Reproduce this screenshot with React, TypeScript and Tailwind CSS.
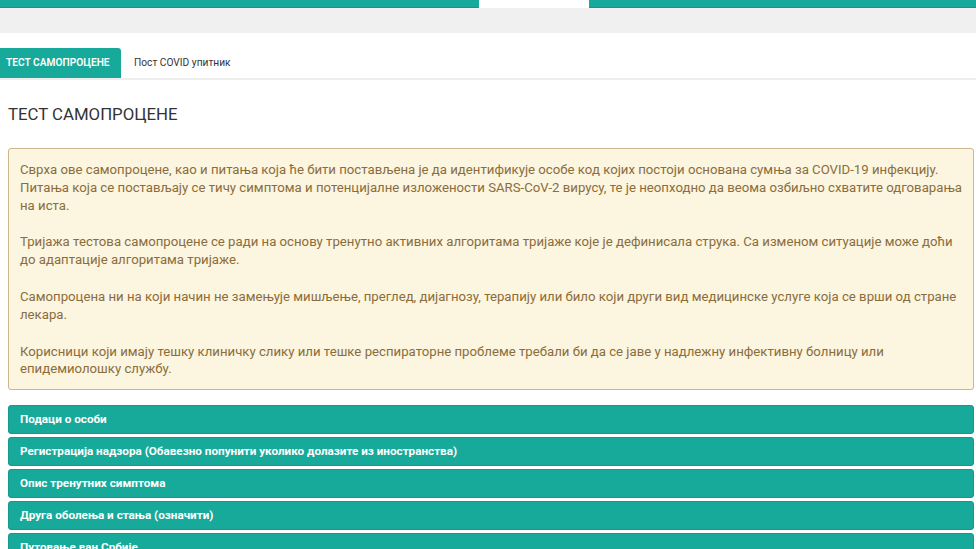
import React from 'react';

const sections = [
  'Подаци о особи',
  'Регистрација надзора (Обавезно попунити уколико долазите из иностранства)',
  'Опис тренутних симптома',
  'Друга оболења и стања (означити)',
  'Путовање ван Србије',
];

const App: React.FC = () => {
  return (
    <div className="bg-white font-['Roboto',sans-serif] text-[#333] overflow-hidden h-[549px]">
      {/* Top bar */}
      <div className="flex h-[8px]">
        <div className="w-[479px] bg-[#17a999] border-b border-[#12978a]" />
        <div className="w-[110px] bg-white" />
        <div className="flex-1 bg-[#17a999] border-b border-[#12978a]" />
      </div>
      <div className="h-[25px] bg-[#f0f0f0]" />

      {/* Tabs */}
      <div className="mt-[15px] flex border-b-2 border-[#eeeeee] h-[32px]">
        <div className="w-[121px] bg-[#17a999] rounded-tr-[3px] text-white text-[10.2px] font-semibold flex items-center pl-[6px]">
          ТЕСТ САМОПРОЦЕНЕ
        </div>
        <div className="px-[13px] text-[10.2px] text-[#333] flex items-center">Пост COVID упитник</div>
      </div>

      <div className="pl-[8px] pr-[2px]">
        <h2 className="mt-[22px] text-[16.8px] leading-[24px] text-[#333]">ТЕСТ САМОПРОЦЕНЕ</h2>

        {/* Info box */}
        <div className="mt-[22px] bg-[#fcf5e0] border border-[#cdb68c] rounded-[3px] pl-[11px] pr-[8px] pt-[12px] pb-[11px] text-[13.2px] leading-[17.8px] text-[#8a6d3b]">
          <p>
            Сврха ове самопроцене, као и питања која ће бити постављена је да идентификује особе код којих постоји основана сумња за COVID-19 инфекцију. Питања која се постављају се тичу симптома и потенцијалне изложености SARS-CoV-2 вирусу, те је неопходно да веома озбиљно схватите одговарања на иста.
          </p>
          <p className="mt-[19px]">
            Тријажа тестова самопроцене се ради на основу тренутно активних алгоритама тријаже које је дефинисала струка. Са изменом ситуације може доћи до адаптације алгоритама тријаже.
          </p>
          <p className="mt-[19px]">
            Самопроцена ни на који начин не замењује мишљење, преглед, дијагнозу, терапију или било који други вид медицинске услуге која се врши од стране лекара.
          </p>
          <p className="mt-[19px]">
            Корисници који имају тешку клиничку слику или тешке респираторне проблеме требали би да се јаве у надлежну инфективну болницу или епидемиолошку службу.
          </p>
        </div>

        {/* Accordion */}
        <div className="mt-[15px] flex flex-col gap-[3px]">
          {sections.map((s) => (
            <div
              key={s}
              className="h-[29px] shrink-0 bg-[#17a999] border border-[#14998b] rounded-[3px] px-[11px] flex items-center text-white text-[11.7px] font-bold"
            >
              {s}
            </div>
          ))}
        </div>
      </div>
    </div>
  );
};

export default App;
